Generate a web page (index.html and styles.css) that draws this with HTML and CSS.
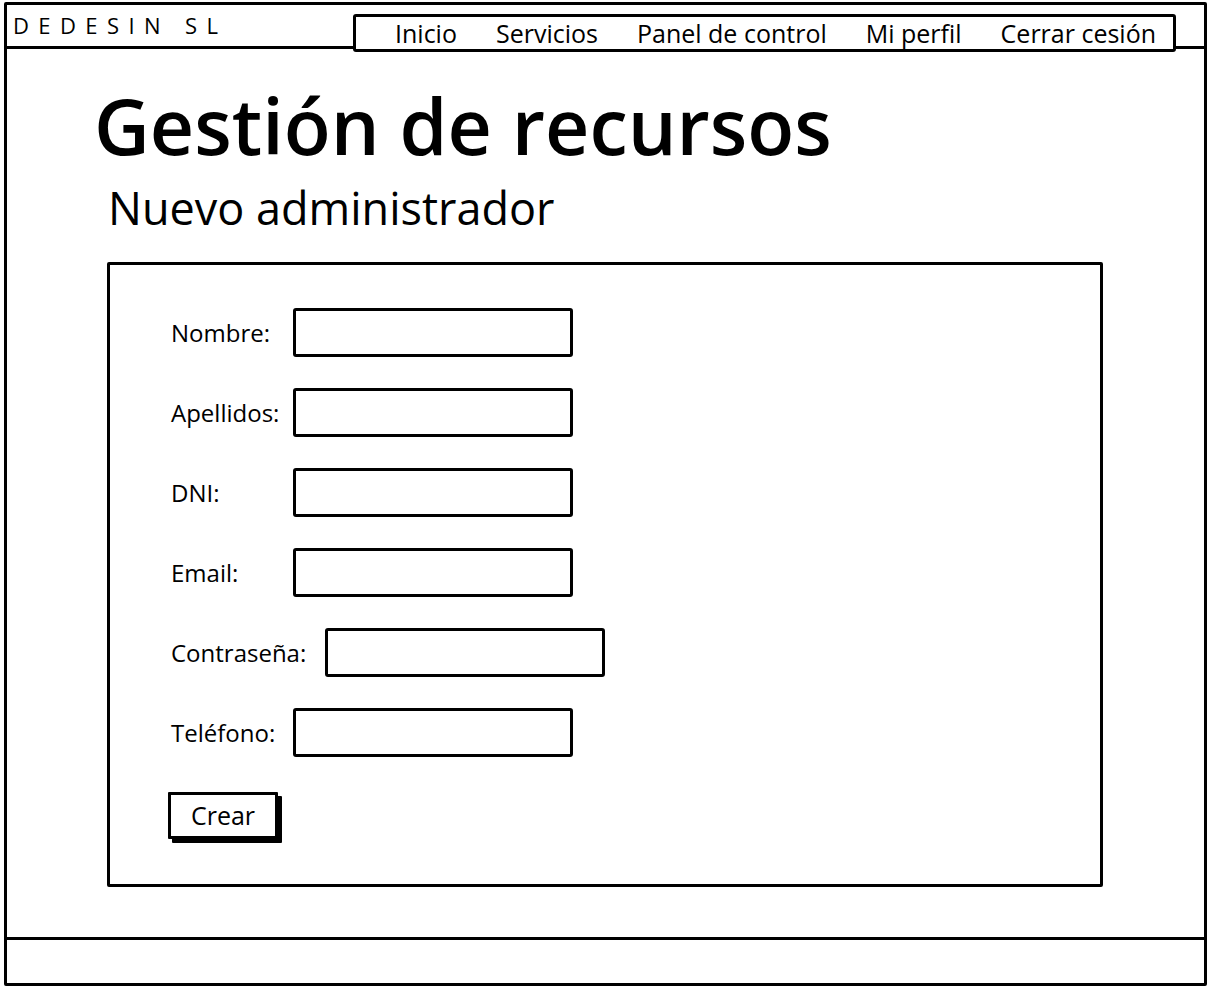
FILE: index.html
```html
<!DOCTYPE html>
<html lang="es">
<head>
<meta charset="utf-8">
<title>Gestión de recursos</title>
<link rel="stylesheet" href="styles.css">
</head>
<body>
<div class="frame">
  <header class="topbar">
    <div class="brand">DEDESIN SL</div>
    <nav class="nav">
      <a class="nav-item" href="#">Inicio</a>
      <a class="nav-item" href="#">Servicios</a>
      <a class="nav-item" href="#">Panel de control</a>
      <a class="nav-item" href="#">Mi perfil</a>
      <a class="nav-item" href="#">Cerrar cesión</a>
    </nav>
  </header>
  <main class="content">
    <h1 class="title">Gestión de recursos</h1>
    <h2 class="subtitle">Nuevo administrador</h2>
    <form class="card">
      <div class="row"><label class="label">Nombre:</label><div class="input"></div></div>
      <div class="row"><label class="label">Apellidos:</label><div class="input"></div></div>
      <div class="row"><label class="label">DNI:</label><div class="input"></div></div>
      <div class="row"><label class="label">Email:</label><div class="input"></div></div>
      <div class="row"><label class="label wide">Contraseña:</label><div class="input"></div></div>
      <div class="row"><label class="label">Teléfono:</label><div class="input"></div></div>
      <div class="actions"><button type="button" class="btn">Crear</button></div>
    </form>
  </main>
  <footer class="footer"></footer>
</div>
</body>
</html>
```
FILE: styles.css
```css
* { box-sizing: border-box; }
html, body { margin: 0; padding: 0; background: #fff; }
body {
  width: 1210px;
  height: 988px;
  padding: 2px 3px 2px 4px;
  font-family: "Open Sans", "Liberation Sans", sans-serif;
  color: #000;
}
.frame {
  height: 984px;
  border: 3px solid #000;
  border-radius: 2px;
  display: flex;
  flex-direction: column;
}
.topbar {
  height: 44px;
  border-bottom: 3px solid #000;
  display: flex;
  align-items: flex-start;
  padding-left: 6px;
  padding-right: 28px;
}
.brand {
  font-size: 22px;
  letter-spacing: 9.4px;
  line-height: 1;
  margin-top: 9px;
  white-space: nowrap;
}
.nav {
  margin-top: 9px;
  height: 38px;
  margin-left: auto;
  width: 823px;
  border: 3px solid #000;
  border-radius: 3px;
  background: #fff;
  display: flex;
  align-items: center;
  padding-left: 39px;
  gap: 39px;
}
.nav-item {
  color: #000;
  text-decoration: none;
  font-size: 25px;
  line-height: 1;
  white-space: nowrap;
}
.content {
  flex: 1;
  padding: 38px 0 0 87px;
}
.title {
  margin: 0;
  font-size: 77px;
  font-weight: 600;
  line-height: 1;
  white-space: nowrap;
}
.subtitle {
  margin: 21px 0 0 14px;
  font-size: 45px;
  font-weight: 400;
  line-height: 1;
}
.card {
  margin: 32px 0 0 13px;
  width: 996px;
  height: 625px;
  border: 3px solid #000;
  border-radius: 2px;
  padding: 43px 0 0 61px;
}
.row {
  display: flex;
  align-items: center;
  height: 49px;
  margin-bottom: 31px;
}
.label {
  width: 122px;
  font-size: 24px;
  white-space: nowrap;
}
.label.wide { width: 154px; }
.input {
  width: 280px;
  height: 49px;
  border: 3px solid #000;
  border-radius: 3px;
  background: #fff;
}
.actions { margin-top: 35px; }
.btn {
  margin-left: -3px;
  width: 110px;
  height: 47px;
  border: 3px solid #000;
  border-radius: 1px;
  background: #fff;
  box-shadow: 4px 4px 0 #000;
  font-family: inherit;
  font-size: 25px;
  line-height: 1;
  color: #000;
  padding: 0;
}
.footer {
  height: 46px;
  border-top: 3px solid #000;
}
```
